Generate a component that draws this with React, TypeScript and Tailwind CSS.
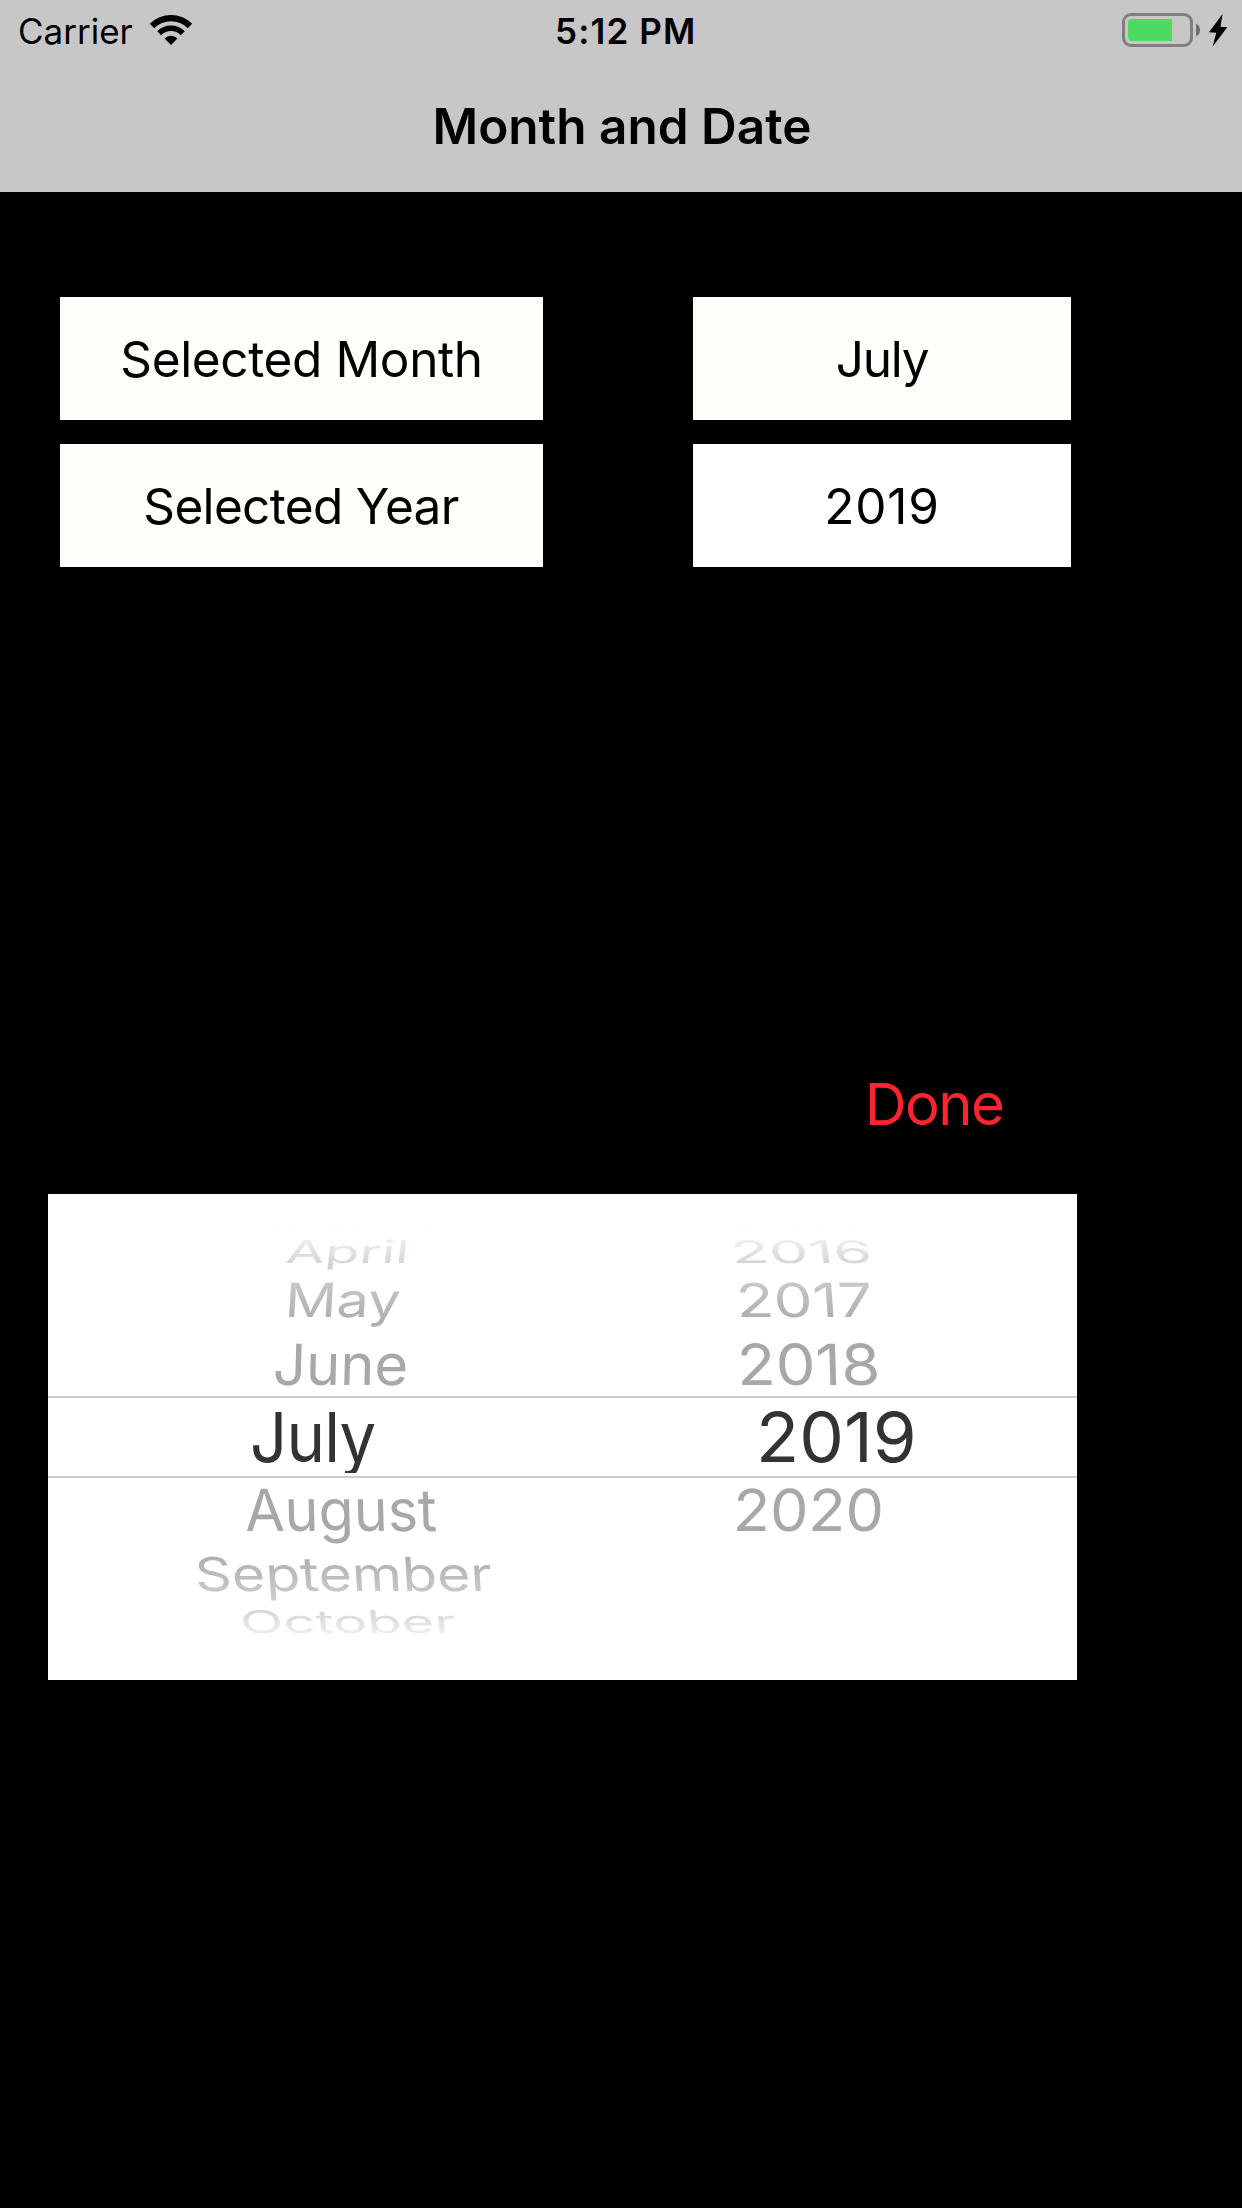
import type { ReactNode } from "react";

function WifiIcon() {
  return (
    <svg className="ml-[16px] h-[62px] w-[44px]" viewBox="149 0 44 62" fill="#000">
      <path d="M149.8 23.8A30 30 0 0 1 192.2 23.8L187.75 28.25A23.7 23.7 0 0 0 154.25 28.25Z" />
      <path d="M157.2 31.2A19.6 19.6 0 0 1 184.8 31.2L180.8 35.2A13.8 13.8 0 0 0 161.2 35.2Z" />
      <path d="M164.5 38.5A9.3 9.3 0 0 1 177.5 38.5L171 45Z" />
    </svg>
  );
}

function BatteryIcon() {
  return (
    <svg className="h-[62px] w-[122px]" viewBox="1120 0 122 62">
      <rect x="1123.5" y="14.5" width="68" height="31" rx="7.5" fill="none" stroke="#7f7f7f" strokeWidth="3" />
      <path d="M1172 19V41H1132Q1128 41 1128 37V23Q1128 19 1132 19Z" fill="#4cd964" />
      <path d="M1196 23.5Q1200 25.5 1200 30T1196 36.5Z" fill="#6e6e6e" />
      <path d="M1222.5 14L1209 32.3L1216.3 32.7L1212.5 46.7L1227.3 27.3L1220.5 26.8Z" fill="#000" />
    </svg>
  );
}

function Field({ className, children }: { className: string; children: ReactNode }) {
  return (
    <div className={`flex h-[123px] items-center justify-center pt-px text-[49.5px] leading-[60px] text-black ${className}`}>
      {children}
    </div>
  );
}

type Row = { label: string; row: string; text: string };

const months: Row[] = [
  { label: "March", row: "h-[14px] pl-[223px]", text: "[transform:scale(0.945,0.19)_skewX(-4deg)]" },
  { label: "April", row: "h-[37px] pl-[238px]", text: "[transform:scale(0.975,0.54)_skewX(-3.5deg)]" },
  { label: "May", row: "h-[59px] pl-[236.7px]", text: "[transform:scale(0.99,0.81)_skewX(-3deg)]" },
  { label: "June", row: "h-[69px] pl-[225.3px]", text: "[transform:scaleY(0.98)_skewX(-1.5deg)]" },
  { label: "July", row: "h-[78px] pl-[202.3px]", text: "h-[72px] overflow-hidden text-[69px] leading-[72px] tracking-[-0.8px] text-[#333] [transform:scaleX(0.945)]" },
  { label: "August", row: "h-[68px] pl-[197.3px]", text: "[transform:scaleX(0.989)_skewX(1.5deg)]" },
  { label: "September", row: "h-[59px] pl-[147px]", text: "[transform:scale(0.987,0.81)_skewX(3deg)]" },
  { label: "October", row: "h-[37px] pl-[192px]", text: "[transform:scale(0.971,0.54)_skewX(3.5deg)]" },
];

const years: Row[] = [
  { label: "2015", row: "h-[14px] pl-[166px]", text: "[transform:scale(1.03,0.19)_skewX(4deg)]" },
  { label: "2016", row: "h-[37px] pl-[168px]", text: "[transform:scale(1.07,0.54)_skewX(4deg)]" },
  { label: "2017", row: "h-[59px] pl-[173.3px]", text: "[transform:scale(1.064,0.81)_skewX(3deg)]" },
  { label: "2018", row: "h-[69px] pl-[173.7px]", text: "[transform:scale(1.09,0.98)_skewX(1.5deg)]" },
  { label: "2019", row: "h-[78px] pl-[192.7px]", text: "text-[69px] leading-[72px] text-[#333] [transform:scaleX(1.027)]" },
  { label: "2020", row: "h-[68px] pl-[170px]", text: "[transform:scaleX(1.05)_skewX(-1.5deg)]" },
];

function Wheel({ rows, className }: { rows: Row[]; className: string }) {
  return (
    <div className={`flex flex-col pt-[25px] text-[58px] leading-[70px] text-[#a8a8a8] ${className}`}>
      {rows.map((r) => (
        <div key={r.label} className={`flex shrink-0 items-center ${r.row}`}>
          <span className={`block origin-left whitespace-nowrap ${r.text}`}>{r.label}</span>
        </div>
      ))}
    </div>
  );
}

export default function App() {
  return (
    <div className="h-[2208px] w-[1242px] overflow-hidden bg-black font-['Inter',sans-serif]">
      <header className="h-[192px] bg-[#c7c7c7] text-black">
        <div className="flex h-[62px] items-center text-[35px] leading-[42px]">
          <div className="flex w-[555px] items-center pl-[18px]">
            <span>Carrier</span>
            <WifiIcon />
          </div>
          <span className="font-semibold tracking-[1.15px]">5:12 PM</span>
          <div className="ml-auto">
            <BatteryIcon />
          </div>
        </div>
        <h1 className="flex h-[130px] items-center justify-center pb-[3px] pl-[2px] text-[49.5px] leading-[60px] font-semibold">
          Month and Date
        </h1>
      </header>

      <main className="pt-[105px]">
        <section className="ml-[60px] grid grid-cols-[483px_378px] gap-x-[150px] gap-y-6">
          <Field className="bg-[#fefff9] tracking-[-0.37px]">Selected Month</Field>
          <Field className="bg-[#fefff9] pr-px tracking-[-0.68px]">Selected Year</Field>
          <Field className="col-start-2 row-start-1 bg-[#fefff9] tracking-[-1.25px]">July</Field>
          <Field className="col-start-2 row-start-2 bg-white tracking-[0.82px]">2019</Field>
        </section>

        <button className="mt-[507px] ml-[864.7px] block text-[58px] leading-[60px] tracking-[-1.53px] text-[#ff2430]">
          Done
        </button>

        <section className="relative mt-[60px] ml-[48px] flex h-[486px] w-[1029px] overflow-hidden bg-white">
          <Wheel rows={months} className="w-[515px]" />
          <Wheel rows={years} className="w-[514px]" />
          <div className="pointer-events-none absolute inset-x-0 top-0 h-[146px] bg-[linear-gradient(to_bottom,#fff_31px,rgba(255,255,255,0.97)_36px,rgba(255,255,255,0.81)_46px,rgba(255,255,255,0.53)_68px,rgba(255,255,255,0.37)_88px,rgba(255,255,255,0.1)_122px,rgba(255,255,255,0)_146px)]" />
          <div className="pointer-events-none absolute inset-x-0 bottom-0 h-[146px] bg-[linear-gradient(to_top,#fff_31px,rgba(255,255,255,0.97)_36px,rgba(255,255,255,0.81)_46px,rgba(255,255,255,0.53)_68px,rgba(255,255,255,0.37)_88px,rgba(255,255,255,0.1)_122px,rgba(255,255,255,0)_146px)]" />
          <div className="pointer-events-none absolute inset-x-0 top-[202px] h-[82px] border-y-2 border-[#ccc]" />
        </section>
      </main>
    </div>
  );
}
